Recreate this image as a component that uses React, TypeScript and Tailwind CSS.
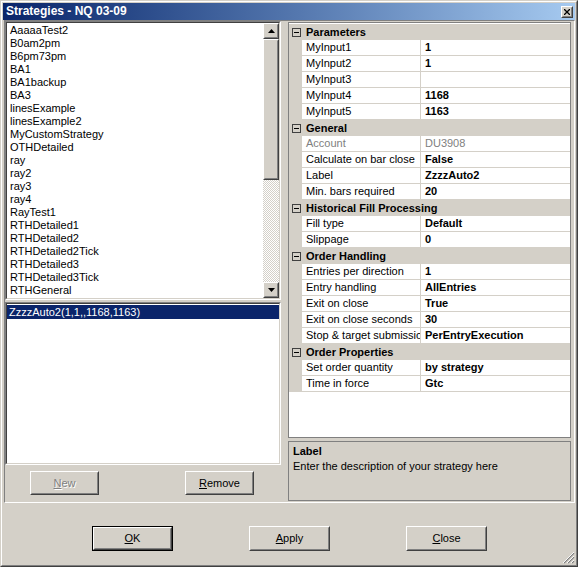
import React from "react";

const strategies = [
  "AaaaaTest2",
  "B0am2pm",
  "B6pm73pm",
  "BA1",
  "BA1backup",
  "BA3",
  "linesExample",
  "linesExample2",
  "MyCustomStrategy",
  "OTHDetailed",
  "ray",
  "ray2",
  "ray3",
  "ray4",
  "RayTest1",
  "RTHDetailed1",
  "RTHDetailed2",
  "RTHDetailed2Tick",
  "RTHDetailed3",
  "RTHDetailed3Tick",
  "RTHGeneral",
];

type Row = { c: string } | { n: string; v: string; d?: boolean };

const rows: Row[] = [
  { c: "Parameters" },
  { n: "MyInput1", v: "1" },
  { n: "MyInput2", v: "1" },
  { n: "MyInput3", v: "" },
  { n: "MyInput4", v: "1168" },
  { n: "MyInput5", v: "1163" },
  { c: "General" },
  { n: "Account", v: "DU3908", d: true },
  { n: "Calculate on bar close", v: "False" },
  { n: "Label", v: "ZzzzAuto2" },
  { n: "Min. bars required", v: "20" },
  { c: "Historical Fill Processing" },
  { n: "Fill type", v: "Default" },
  { n: "Slippage", v: "0" },
  { c: "Order Handling" },
  { n: "Entries per direction", v: "1" },
  { n: "Entry handling", v: "AllEntries" },
  { n: "Exit on close", v: "True" },
  { n: "Exit on close seconds", v: "30" },
  { n: "Stop & target submission", v: "PerEntryExecution" },
  { c: "Order Properties" },
  { n: "Set order quantity", v: "by strategy" },
  { n: "Time in force", v: "Gtc" },
];

function Raised({ className = "", children }: { className?: string; children?: React.ReactNode }) {
  return (
    <div className={`border border-t-white border-l-white border-r-[#404040] border-b-[#404040] bg-[#d4d0c8] ${className}`}>
      <div className="h-full w-full border border-t-[#d4d0c8] border-l-[#d4d0c8] border-r-[#808080] border-b-[#808080] flex items-center justify-center">
        {children}
      </div>
    </div>
  );
}

function Sunken({ className = "", children }: { className?: string; children?: React.ReactNode }) {
  return (
    <div className={`border border-t-[#808080] border-l-[#808080] border-r-white border-b-white ${className}`}>
      <div className="h-full w-full border border-t-[#404040] border-l-[#404040] border-r-[#d4d0c8] border-b-[#d4d0c8] bg-white overflow-hidden">
        {children}
      </div>
    </div>
  );
}

function Arrow({ up }: { up?: boolean }) {
  return (
    <svg width="7" height="4" viewBox="0 0 7 4" className="block">
      {up ? <polygon points="3.5,0 7,4 0,4" fill="#000" /> : <polygon points="0,0 7,0 3.5,4" fill="#000" />}
    </svg>
  );
}

function MinusBox() {
  return (
    <div className="w-[9px] h-[9px] border border-[#404040] flex items-center justify-center">
      <div className="w-[5px] h-px bg-black" />
    </div>
  );
}

export default function App() {
  return (
    <div className="w-[578px] h-[567px] bg-[#d4d0c8] font-['Liberation_Sans',Arial,sans-serif] text-[11px] text-black border border-t-[#d4d0c8] border-l-[#d4d0c8] border-r-[#404040] border-b-[#404040]">
      <div className="h-full w-full border border-t-white border-l-white border-r-[#808080] border-b-[#808080] p-px flex flex-col">
        {/* Title bar */}
        <div className="h-[17px] shrink-0 flex items-center justify-between pl-[3px] pr-[2px] bg-gradient-to-r from-[#0a246a] to-[#a6caf0]">
          <span className="text-white font-bold text-[12px] leading-[17px] whitespace-nowrap">Strategies - NQ 03-09</span>
          <Raised className="w-[12px] h-[12px]">
            <svg width="6" height="6" viewBox="0 0 6 6" className="block">
              <path d="M0 0L6 6M6 0L0 6" stroke="#000" strokeWidth="1.3" />
            </svg>
          </Raised>
        </div>

        {/* Main panel */}
        <div className="ml-px h-[483px] shrink-0 border border-t-[#808080] border-l-[#808080] border-r-white border-b-white flex">
          {/* Left column */}
          <div className="w-[276px] shrink-0 flex flex-col">
            <Sunken className="h-[279px]">
              <div className="flex h-full">
                <div className="flex-1 pt-px overflow-hidden">
                  {strategies.map((s) => (
                    <div key={s} className="h-[13px] leading-[13px] pl-[3px] whitespace-nowrap">
                      {s}
                    </div>
                  ))}
                </div>
                <div className="w-[16px] shrink-0 flex flex-col">
                  <Raised className="h-[16px] shrink-0">
                    <Arrow up />
                  </Raised>
                  <div className="flex-1 bg-[image:repeating-conic-gradient(#ffffff_0_25%,#d4d0c8_0_50%)] bg-[length:2px_2px]">
                    <Raised className="h-[141px]" />
                  </div>
                  <Raised className="h-[16px] shrink-0">
                    <Arrow />
                  </Raised>
                </div>
              </div>
            </Sunken>
            <Sunken className="h-[163px] mt-[2px]">
              <div className="mt-px h-[14px] leading-[14px] bg-[#0a246a] text-white pl-[2px] whitespace-nowrap">
                ZzzzAuto2(1,1,,1168,1163)
              </div>
            </Sunken>
            <div className="flex pt-[6px] pl-[25px] gap-[86px]">
              <Raised className="w-[69px] h-[24px]">
                <span className="text-[#808080] [text-shadow:1px_1px_0_#ffffff]">
                  <span className="underline">N</span>ew
                </span>
              </Raised>
              <Raised className="w-[69px] h-[24px]">
                <span>
                  <span className="underline">R</span>emove
                </span>
              </Raised>
            </div>
          </div>

          {/* Splitter */}
          <div className="w-[7px] shrink-0" />

          {/* Right column */}
          <div className="w-[283px] shrink-0 flex flex-col">
            <div className="mt-px h-[416px] border border-[#808080] bg-white pt-px overflow-hidden">
              {rows.map((r, i) =>
                "c" in r ? (
                  <div key={i} className="h-[16px] flex items-center bg-[#d4d0c8]">
                    <div className="w-[13px] shrink-0 pl-[3px]">
                      <MinusBox />
                    </div>
                    <span className="pl-[4px] font-bold leading-[16px] whitespace-nowrap">{r.c}</span>
                  </div>
                ) : (
                  <div key={i} className="h-[16px] flex">
                    <div className="w-[13px] shrink-0 bg-[#d4d0c8]" />
                    <div
                      className={`w-[119px] shrink-0 border-r border-b border-[#d4d0c8] pl-[4px] leading-[15px] whitespace-nowrap overflow-hidden ${
                        r.d ? "text-[#808080]" : ""
                      }`}
                    >
                      {r.n}
                    </div>
                    <div
                      className={`flex-1 border-b border-[#d4d0c8] pl-[4px] leading-[15px] whitespace-nowrap overflow-hidden ${
                        r.d ? "text-[#808080]" : "font-bold"
                      }`}
                    >
                      {r.v}
                    </div>
                  </div>
                )
              )}
            </div>
            <div className="mt-[3px] h-[60px] border border-[#808080] bg-[#d4d0c8] px-[4px] pt-[2px]">
              <div className="font-bold leading-[15px]">Label</div>
              <div className="leading-[15px]">Enter the description of your strategy here</div>
            </div>
          </div>
        </div>

        {/* Bottom buttons */}
        <div className="relative flex-1 flex items-start pt-[23px] pl-[89px] gap-[76px]">
          <div className="w-[81px] h-[25px] border border-black">
            <Raised className="w-full h-full">
              <span>
                <span className="underline">O</span>K
              </span>
            </Raised>
          </div>
          <Raised className="w-[81px] h-[25px]">
            <span>
              <span className="underline">A</span>pply
            </span>
          </Raised>
          <Raised className="w-[81px] h-[25px]">
            <span>
              <span className="underline">C</span>lose
            </span>
          </Raised>
          <svg width="12" height="12" viewBox="0 0 12 12" className="absolute right-0 bottom-0">
            <path d="M11 1L1 11M11 5L5 11M11 9L9 11" stroke="#808080" strokeWidth="1.2" />
            <path d="M11 0L0 11M11 4L4 11M11 8L8 11" stroke="#ffffff" strokeWidth="0.9" />
          </svg>
        </div>
      </div>
    </div>
  );
}
